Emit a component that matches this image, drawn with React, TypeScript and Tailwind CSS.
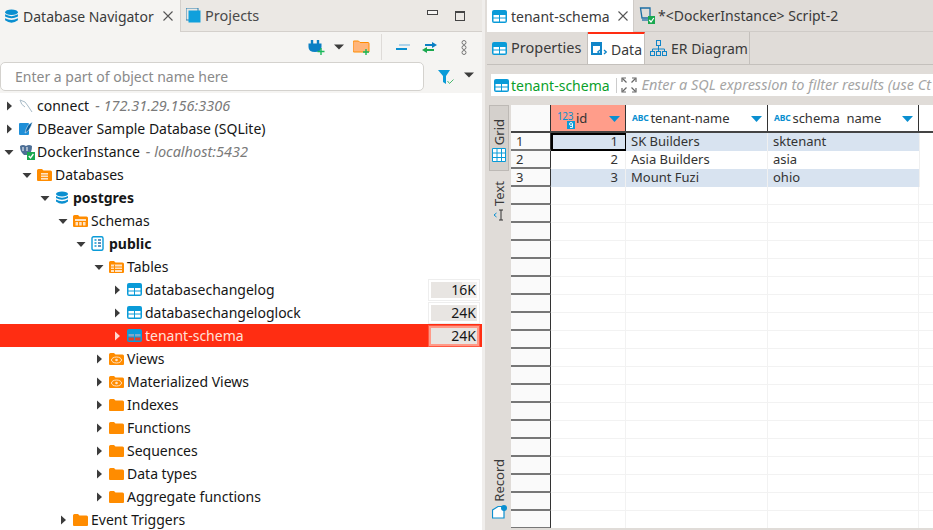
import React from 'react';

const FONT = "font-['Noto_Sans',sans-serif]";

function TableIcon({ dark }: { dark?: boolean }) {
  return (
    <svg width="15" height="13" viewBox="0 0 15 13" className="shrink-0">
      <rect x="0" y="0" width="15" height="13" rx="2" fill="#0a9bd8" />
      <rect x="1.5" y="5" width="5.5" height="2.5" fill={dark ? '#7ea8c8' : '#fff'} />
      <rect x="8" y="5" width="5.5" height="2.5" fill={dark ? '#7ea8c8' : '#fff'} />
      <rect x="1.5" y="8.5" width="5.5" height="3" fill={dark ? '#e0402a' : '#fff'} />
      <rect x="8" y="8.5" width="5.5" height="3" fill={dark ? '#e0402a' : '#fff'} />
    </svg>
  );
}

function Folder({ children }: { children?: React.ReactNode }) {
  return (
    <svg width="15" height="14" viewBox="0 0 15 14" className="shrink-0">
      <path d="M0 2.5 Q0 1 1.5 1 H5 L6.5 2.5 H13.5 Q15 2.5 15 4 V12 Q15 13 14 13 H1 Q0 13 0 12 Z" fill="#ff8c00" />
      {children}
    </svg>
  );
}

function DbIcon({ size = 14 }: { size?: number }) {
  return (
    <svg width={size} height={size} viewBox="0 0 14 14" className="shrink-0">
      <ellipse cx="7" cy="3" rx="6" ry="2.6" fill="#0a8fd0" />
      <path d="M1 5 Q7 8.4 13 5 V7 Q7 10.4 1 7 Z" fill="#0a8fd0" />
      <path d="M1 8.6 Q7 12 13 8.6 V10.6 Q7 15 1 10.6 Z" fill="#0a8fd0" />
    </svg>
  );
}

function Arrow({ open, light }: { open: boolean; light?: boolean }) {
  const color = light ? '#ffd7cf' : '#3c3c3c';
  return (
    <svg width="10" height="10" viewBox="0 0 10 10" className="shrink-0">
      {open ? <path d="M0.5 3 H9.5 L5 8 Z" fill={color} /> : <path d="M3 0.5 L8 5 L3 9.5 Z" fill={color} />}
    </svg>
  );
}

function CaretDown() {
  return (
    <svg width="10" height="6" viewBox="0 0 10 6">
      <path d="M0 0.5 H10 L5 5.5 Z" fill="#3c3c3c" />
    </svg>
  );
}

const eye = (
  <>
    <ellipse cx="7.5" cy="8" rx="5" ry="3" fill="none" stroke="#ffe3c4" strokeWidth="1" />
    <circle cx="7.5" cy="8" r="1.3" fill="#ffe3c4" />
  </>
);

const icons: Record<string, React.ReactNode> = {
  mysql: (
    <svg width="14" height="14" viewBox="0 0 14 14" className="shrink-0">
      <path d="M1 1 Q7 2 9 7 L13 13 M1 1 Q2 6 6 8" fill="none" stroke="#a9bcc8" strokeWidth="1" />
    </svg>
  ),
  sqlite: (
    <svg width="14" height="14" viewBox="0 0 14 14" className="shrink-0">
      <rect x="0" y="1" width="10" height="12" rx="1" fill="#1f8fd8" />
      <path d="M13.5 0 Q8 2 6 11 Q11 9 13.5 0 Z" fill="#0b5f9e" stroke="#fff" strokeWidth="0.5" />
    </svg>
  ),
  pg: (
    <svg width="16" height="16" viewBox="0 0 16 16" className="shrink-0">
      <path d="M1 2 Q4 0 7 2 Q10 0 13 2 Q13 8 10 11 H5 Q1 8 1 2 Z" fill="#4d6f96" />
      <path d="M4 3 V7 M8 3 V7" stroke="#fff" strokeWidth="1" />
      <rect x="8" y="8" width="8" height="8" fill="#1aa84f" />
      <path d="M9.8 12 L11.5 14 L14.4 10" fill="none" stroke="#fff" strokeWidth="1.3" />
    </svg>
  ),
  databases: (
    <Folder>
      <rect x="4" y="5" width="7" height="1.6" fill="#ffe3c4" />
      <rect x="4" y="7.5" width="7" height="1.6" fill="#ffe3c4" />
      <rect x="4" y="10" width="7" height="1.6" fill="#ffe3c4" />
    </Folder>
  ),
  db: <DbIcon />,
  schemas: (
    <Folder>
      <rect x="2" y="5" width="11" height="2" fill="#ffe3c4" />
      <rect x="2.5" y="8" width="2.5" height="3.5" fill="#ffe3c4" />
      <rect x="6.2" y="8" width="2.5" height="3.5" fill="#ffe3c4" />
      <rect x="10" y="8" width="2.5" height="3.5" fill="#ffe3c4" />
    </Folder>
  ),
  schema: (
    <svg width="13" height="15" viewBox="0 0 13 15" className="shrink-0">
      <rect x="1" y="0.8" width="11" height="13.4" rx="1.5" fill="#fff" stroke="#0a9bd8" strokeWidth="1.4" />
      <path d="M3.5 4 H5.5 M3.5 7 H5.5 M3.5 10 H5.5" stroke="#0a9bd8" strokeWidth="1.4" />
      <path d="M7 4 H10 M7 7 H10 M7 10 H10" stroke="#2a6fa8" strokeWidth="1.4" />
    </svg>
  ),
  tables: (
    <Folder>
      <rect x="2" y="4.5" width="11" height="7.5" fill="#ffe3c4" />
      <path d="M2 7 H13 M2 9.5 H13 M5.5 4.5 V12" stroke="#ff8c00" strokeWidth="1" />
    </Folder>
  ),
  table: <TableIcon />,
  tableSel: <TableIcon dark />,
  views: <Folder>{eye}</Folder>,
  folder: <Folder />,
};

type Node = {
  depth: number;
  label: string;
  icon: string;
  open?: boolean;
  bold?: boolean;
  hint?: string;
  size?: string;
  selected?: boolean;
  fill?: string;
};

const tree: Node[] = [
  { depth: 0, label: 'connect', icon: 'mysql', hint: '- 172.31.29.156:3306' },
  { depth: 0, label: 'DBeaver Sample Database (SQLite)', icon: 'sqlite' },
  { depth: 0, label: 'DockerInstance', icon: 'pg', open: true, hint: '- localhost:5432' },
  { depth: 1, label: 'Databases', icon: 'databases', open: true },
  { depth: 2, label: 'postgres', icon: 'db', open: true, bold: true },
  { depth: 3, label: 'Schemas', icon: 'schemas', open: true },
  { depth: 4, label: 'public', icon: 'schema', open: true, bold: true },
  { depth: 5, label: 'Tables', icon: 'tables', open: true },
  { depth: 6, label: 'databasechangelog', icon: 'table', size: '16K', fill: 'w-2/3' },
  { depth: 6, label: 'databasechangeloglock', icon: 'table', size: '24K', fill: 'w-full' },
  { depth: 6, label: 'tenant-schema', icon: 'tableSel', size: '24K', selected: true, fill: 'w-full' },
  { depth: 5, label: 'Views', icon: 'views' },
  { depth: 5, label: 'Materialized Views', icon: 'views' },
  { depth: 5, label: 'Indexes', icon: 'folder' },
  { depth: 5, label: 'Functions', icon: 'folder' },
  { depth: 5, label: 'Sequences', icon: 'folder' },
  { depth: 5, label: 'Data types', icon: 'folder' },
  { depth: 5, label: 'Aggregate functions', icon: 'folder' },
  { depth: 3, label: 'Event Triggers', icon: 'folder' },
];

function TreeRow({ node }: { node: Node }) {
  return (
    <div className={`flex items-center h-[23px] shrink-0 pr-[3px] ${node.selected ? 'bg-[#ff2d12] text-[#ffe0d8]' : 'text-[#161616]'}`}>
      <div className="flex items-center flex-1 min-w-0 pl-[4px]" style={{ marginLeft: node.depth * 18 }}>
        <Arrow open={!!node.open} light={node.selected} />
        <div className="w-[16px] ml-[5px] flex items-center shrink-0">{icons[node.icon]}</div>
        <span className={`ml-[2px] whitespace-nowrap ${node.bold ? 'font-bold' : ''}`}>{node.label}</span>
        {node.hint && <span className="ml-[6px] italic text-[#7a7a7a] whitespace-pre text-[14.5px]">{node.hint}</span>}
      </div>
      {node.size && (
        <div className={`relative w-[50px] h-[20px] border-2 text-right text-[#161616] pr-[1px] leading-[16px] outline ${node.selected ? 'border-[#ff9a88] outline-[#ffffff33] bg-[#f2f0ee]' : 'border-white outline-[#eeeeee] bg-[#f3f1ef]'}`}>
          <div className={`absolute inset-y-0 left-0 bg-[#e8e5e2] ${node.fill}`} />
          <span className="relative">{node.size}</span>
        </div>
      )}
    </div>
  );
}

function LeftPanel() {
  return (
    <div className="w-[482px] shrink-0 flex flex-col h-full bg-white overflow-hidden">
      <div className="flex h-[32px] shrink-0 bg-[#ebe8e4] border-b border-[#d4d0cc]">
        <div className="flex items-center w-[181px] h-[32px] bg-[#f5f4f2] border-r border-[#d4d0cc] pl-[4px] text-[#3a3a3a]">
          <DbIcon size={15} />
          <span className="ml-[4px] whitespace-nowrap">Database Navigator</span>
          <svg width="10" height="10" viewBox="0 0 10 10" className="ml-[9px]">
            <path d="M0.5 0.5 L9.5 9.5 M9.5 0.5 L0.5 9.5" stroke="#555" strokeWidth="1.1" />
          </svg>
        </div>
        <div className="flex items-center flex-1 pl-[5px] text-[#4a4a4a]">
          <svg width="15" height="15" viewBox="0 0 15 15">
            <rect x="0" y="0" width="12" height="12" fill="none" stroke="#2a7fb0" strokeWidth="1" />
            <rect x="2.5" y="2.5" width="12" height="12" fill="#10a0dc" />
          </svg>
          <span className="ml-[4px] text-[14.5px]">Projects</span>
          <div className="ml-auto flex items-center gap-[17px] pr-[17px]">
            <div className="w-[11px] h-[5px] border border-[#444] bg-[#f5f4f2] -mt-[6px]" />
            <div className="w-[10px] h-[10px] border border-[#444] border-t-2" />
          </div>
        </div>
      </div>

      <div className="flex items-center justify-end h-[30px] shrink-0 bg-[#f5f4f2] pr-[15px]">
        <svg width="17" height="17" viewBox="0 0 17 17">
          <path d="M4 1 V5 M10 1 V5" stroke="#0a7fc4" strokeWidth="2.4" />
          <path d="M0.5 4.5 H13.5 V8 Q13.5 13 7 13 Q0.5 13 0.5 8 Z" fill="#0a7fc4" />
          <path d="M9.5 12.5 H16.5 M13 9 V16" stroke="#1ab85a" strokeWidth="1.4" />
        </svg>
        <div className="ml-[9px]"><CaretDown /></div>
        <svg width="17" height="15" viewBox="0 0 17 15" className="ml-[9px]">
          <path d="M0 2 Q0 1 1 1 H5.5 L7 2.5 H15 Q16 2.5 16 3.5 V12 H1 Q0 12 0 11 Z" fill="#ffb57a" stroke="#ff8c00" strokeWidth="1" />
          <path d="M10 12 H16 M13 9 V15" stroke="#1ab85a" strokeWidth="1.4" />
        </svg>
        <div className="w-px h-[26px] bg-[#dedbd8] ml-[11px]" />
        <svg width="14" height="8" viewBox="0 0 14 8" className="ml-[14px]">
          <path d="M0 6 H11" stroke="#0a8fd0" strokeWidth="2" />
          <path d="M3 2 H14" stroke="#7fbde4" strokeWidth="1.2" />
        </svg>
        <svg width="15" height="11" viewBox="0 0 15 11" className="ml-[12px]">
          <path d="M3 3 H11" stroke="#0a7fc4" strokeWidth="2" />
          <path d="M10 0 L15 3 L10 6 Z" fill="#0a7fc4" />
          <path d="M4 8 H12" stroke="#1aa84f" strokeWidth="2" />
          <path d="M5 5 L0 8 L5 11 Z" fill="#1aa84f" />
        </svg>
        <svg width="6" height="15" viewBox="0 0 6 15" className="ml-[24px]">
          <circle cx="3" cy="2.5" r="2" fill="none" stroke="#777" />
          <circle cx="3" cy="7.5" r="2" fill="none" stroke="#777" />
          <circle cx="3" cy="12.5" r="2" fill="none" stroke="#777" />
        </svg>
      </div>

      <div className="flex items-start h-[31px] shrink-0 bg-[#f5f4f2]">
        <div className="flex items-center w-[424px] h-[29px] bg-white border border-[#d4d2ce] rounded-[5px] pl-[14px] text-[#8a8a8a]">
          Enter a part of object name here
        </div>
        <svg width="16" height="15" viewBox="0 0 16 15" className="ml-[14px] mt-[8px]">
          <path d="M0 0 H12 L8 6 V14 L5 12 V6 Z" fill="#0a9bd8" />
          <path d="M9.5 11 L11.5 13.5 L15.5 9.5" fill="none" stroke="#4ab870" strokeWidth="1" />
        </svg>
        <div className="ml-[10px] mt-[10px]"><CaretDown /></div>
      </div>

      <div className="flex flex-col flex-1 pt-[1px] overflow-hidden">
        {tree.map((n) => (
          <TreeRow key={n.label + n.depth} node={n} />
        ))}
      </div>
    </div>
  );
}

const rows = [
  { id: 1, name: 'SK Builders', schema: 'sktenant' },
  { id: 2, name: 'Asia Builders', schema: 'asia' },
  { id: 3, name: 'Mount Fuzi', schema: 'ohio' },
];

function AbcIcon() {
  return <span className="text-[8.5px] font-bold text-[#0a8fd0] tracking-[-0.2px] mr-[2px] leading-none">ABC</span>;
}

function SortCaret() {
  return (
    <svg width="11" height="6" viewBox="0 0 11 6" className="ml-auto shrink-0">
      <path d="M0 0 H11 L5.5 6 Z" fill="#0a8fd0" />
    </svg>
  );
}

function DataGrid() {
  const blank = Array.from({ length: 19 });
  return (
    <div className="flex-1 flex flex-col min-w-0 bg-white overflow-hidden text-[13px] text-[#333]">
      <div className="flex h-[28px] shrink-0 border-b-2 border-[#444]">
        <div className="w-[40px] shrink-0 bg-[#fafafa] border-r border-[#333]" />
        <div className="flex items-center w-[75px] shrink-0 bg-[#ff9d8a] border-r border-[#333] pl-[6px] pr-[5px] pt-[1px] text-[13px]">
          <span className="relative w-[18px] h-[14px] shrink-0">
            <span className="absolute left-0 top-[-3px] text-[10px] text-[#0a8fd0] tracking-[-0.4px] leading-[14px]">123</span>
            <svg width="8" height="8" viewBox="0 0 8 8" className="absolute right-0 bottom-[-3px]">
              <rect width="8" height="8" fill="#0a9bd8" />
              <circle cx="4" cy="3" r="1.5" fill="none" stroke="#fff" strokeWidth="0.9" />
              <path d="M5.5 3 V6.5 H3" fill="none" stroke="#fff" strokeWidth="0.9" />
            </svg>
          </span>
          <span className="ml-[1px]">id</span>
          <SortCaret />
        </div>
        <div className="flex items-center w-[142px] shrink-0 bg-white border-r border-[#333] pl-[6px] pr-[5px] pt-[1px] text-[13px]">
          <AbcIcon />
          <span>tenant-name</span>
          <SortCaret />
        </div>
        <div className="flex items-center w-[151px] shrink-0 bg-white border-r border-[#333] pl-[6px] pr-[5px] pt-[1px] text-[13px]">
          <AbcIcon />
          <span className="whitespace-pre">schema  name</span>
          <SortCaret />
        </div>
        <div className="flex-1" />
      </div>
      {rows.map((r) => (
        <div key={r.id} className="flex h-[18px] shrink-0 leading-[17px]">
          <div className="w-[40px] shrink-0 bg-[#fafafa] border-r border-[#333] border-b-2 border-b-[#777] pl-[5px]">{r.id}</div>
          <div className={`w-[75px] shrink-0 text-right pr-[7px] border-r border-[#f0f0f0] ${r.id % 2 ? 'bg-[#d8e3f0]' : ''} ${r.id === 1 ? 'border-2 border-black pr-[5px] leading-[13px]' : ''}`}>{r.id}</div>
          <div className={`w-[142px] shrink-0 pl-[5px] border-r border-[#f0f0f0] ${r.id % 2 ? 'bg-[#d8e3f0]' : ''}`}>{r.name}</div>
          <div className={`w-[151px] shrink-0 pl-[5px] ${r.id % 2 ? 'bg-[#d8e3f0]' : ''}`}>{r.schema}</div>
          <div className="flex-1 border-l border-[#f0f0f0]" />
        </div>
      ))}
      {blank.map((_, i) => (
        <div key={i} className="flex h-[18px] shrink-0">
          <div className="w-[40px] shrink-0 bg-[#fafafa] border-r border-[#333] border-b-2 border-b-[#777]" />
          <div className="w-[75px] shrink-0 border-r border-b border-[#f2f2f2]" />
          <div className="w-[142px] shrink-0 border-r border-b border-[#f2f2f2]" />
          <div className="w-[151px] shrink-0 border-r border-b border-[#f2f2f2]" />
          <div className="flex-1 border-b border-[#f2f2f2]" />
        </div>
      ))}
    </div>
  );
}

function SideTab({ label, active, className, children }: { label: string; active?: boolean; className?: string; children: React.ReactNode }) {
  return (
    <div className={`flex flex-col-reverse items-center justify-start gap-[3px] w-[20px] text-[#3a3a3a] text-[13px] ${active ? 'bg-[#d4d0cc] border border-[#bdb9b5]' : ''} ${className ?? ''}`}>
      {children}
      <span className="[writing-mode:vertical-rl] rotate-180 leading-[18px]">{label}</span>
    </div>
  );
}

function RightPanel() {
  return (
    <div className="flex-1 min-w-0 flex flex-col h-full bg-[#e0dcd8] overflow-hidden pl-[2px] text-[#3a3a3a]">
      <div className="flex h-[32px] shrink-0 border-b border-[#cfcbc7]">
        <div className="flex items-center w-[146px] h-[32px] bg-white pl-[5px]">
          <TableIcon />
          <span className="ml-[4px] whitespace-nowrap">tenant-schema</span>
          <svg width="10" height="10" viewBox="0 0 10 10" className="ml-[8px]">
            <path d="M0.5 0.5 L9.5 9.5 M9.5 0.5 L0.5 9.5" stroke="#555" strokeWidth="1.1" />
          </svg>
        </div>
        <div className="flex items-center pl-[5px] border-l border-[#cfcbc7] whitespace-nowrap">
          <svg width="16" height="17" viewBox="0 0 16 17" className="shrink-0">
            <path d="M1.5 1 H11 V11 H3 Z" fill="none" stroke="#1c6ea4" strokeWidth="1.3" />
            <path d="M3 13 H9" stroke="#1c6ea4" strokeWidth="1.3" />
            <rect x="9" y="9" width="7" height="8" fill="#1aa84f" />
            <path d="M10.3 13 L12 15 L14.8 11" fill="none" stroke="#fff" strokeWidth="1.2" />
          </svg>
          <span className="ml-[3px]">*&lt;DockerInstance&gt; Script-2</span>
        </div>
      </div>

      <div className="flex h-[33px] shrink-0 border-b border-[#c4c0bc]">
        <div className="flex items-center w-[101px] pl-[5px] border-r border-[#c4c0bc]">
          <TableIcon />
          <span className="ml-[4px] text-[14.5px]">Properties</span>
        </div>
        <div className="flex items-center w-[57px] bg-white border-t-[2px] border-[#ff2d12] pl-[3px] border-r border-r-[#c4c0bc]">
          <svg width="16" height="14" viewBox="0 0 16 14" className="shrink-0">
            <rect x="0" y="0" width="11" height="13" fill="#1085c8" />
            <rect x="2" y="4" width="7" height="7" fill="#fff" />
            <path d="M9 8 L6.8 10 L9 12 M13 8 L15.2 10 L13 12" fill="none" stroke="#1085c8" strokeWidth="1.3" />
          </svg>
          <span className="ml-[4px]">Data</span>
        </div>
        <div className="flex items-center w-[105px] pl-[5px] border-r border-[#c4c0bc]">
          <svg width="17" height="16" viewBox="0 0 17 16" className="shrink-0">
            <path d="M8.5 5 V9 M2.5 12 V9 H14.5 V12 M8.5 9 V12" fill="none" stroke="#1085c8" strokeWidth="1" />
            <rect x="6.5" y="0.5" width="4" height="5" fill="none" stroke="#1085c8" />
            <rect x="0.5" y="11.5" width="4" height="4" fill="none" stroke="#1085c8" />
            <rect x="6.5" y="11.5" width="4" height="4" fill="none" stroke="#1085c8" />
            <rect x="12.5" y="11.5" width="4" height="4" fill="none" stroke="#1085c8" />
          </svg>
          <span className="ml-[4px] whitespace-nowrap">ER Diagram</span>
        </div>
      </div>

      <div className="flex items-center h-[22px] mt-[9px] ml-[4px] shrink-0 bg-white pl-[3px] whitespace-nowrap overflow-hidden">
        <TableIcon />
        <span className="ml-[2px] text-[#0aa02a]">tenant-schema</span>
        <div className="w-px h-[15px] bg-[#ccc] ml-[6px]" />
        <svg width="16" height="16" viewBox="0 0 16 16" className="ml-[4px] shrink-0">
          <path d="M1 5 V1 H5 M11 1 H15 V5 M15 11 V15 H11 M5 15 H1 V11" fill="none" stroke="#666" strokeWidth="1.2" />
          <path d="M1.5 1.5 L5.5 5.5 M14.5 1.5 L10.5 5.5 M14.5 14.5 L10.5 10.5 M1.5 14.5 L5.5 10.5" stroke="#666" strokeWidth="1.2" />
        </svg>
        <span className="ml-[5px] italic text-[#a5a5a5] text-[14.5px]">Enter a SQL expression to filter results (use Ct</span>
      </div>

      <div className="flex flex-1 mt-[9px] min-h-0">
        <div className="w-[24px] shrink-0 flex flex-col justify-between pl-[2px] pb-[9px]">
          <div className="flex flex-col gap-[10px]">
            <SideTab label="Grid" active className="pt-[13px] pb-[8px]">
              <svg width="14" height="14" viewBox="0 0 14 14">
                <path d="M0.5 0.5 H13.5 V13.5 H0.5 Z M5 0.5 V13.5 M9.5 0.5 V13.5 M0.5 5 H13.5 M0.5 9.5 H13.5" fill="#fff" stroke="#0a9bd8" strokeWidth="1" />
              </svg>
            </SideTab>
            <SideTab label="Text">
              <svg width="12" height="12" viewBox="0 0 12 12">
                <path d="M8 1 V11 M6 1 H10 M6 11 H10" fill="none" stroke="#333" strokeWidth="1" />
                <path d="M3.5 4 L1 6 L3.5 8" fill="none" stroke="#0a8fd0" strokeWidth="1" />
              </svg>
            </SideTab>
          </div>
          <SideTab label="Record">
            <svg width="15" height="14" viewBox="0 0 15 14">
              <path d="M0.5 5 L6 1.5 H12 V13 H0.5 Z" fill="#fff" stroke="#0a8fd0" strokeWidth="1.2" />
              <circle cx="12" cy="3" r="3" fill="#0a8fd0" />
            </svg>
          </SideTab>
        </div>
        <DataGrid />
      </div>
      <div className="h-[2px] shrink-0" />
    </div>
  );
}

export default function App() {
  return (
    <div className={`flex w-[933px] h-[530px] overflow-hidden bg-[#f5f4f2] text-[14px] ${FONT}`}>
      <LeftPanel />
      <div className="w-[3px] shrink-0 bg-[#f0eeec]" />
      <RightPanel />
    </div>
  );
}
